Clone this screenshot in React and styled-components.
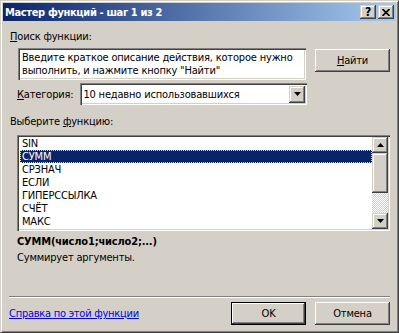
import React from 'react';
import styled, { createGlobalStyle, css } from 'styled-components';

const FACE = '#d4d0c8';
const FONT = `"DejaVu Sans Condensed", "Liberation Sans", Arial, sans-serif`;

const GlobalStyle = createGlobalStyle`
  html, body {
    margin: 0;
    padding: 0;
    background: ${FACE};
  }
  body {
    font-family: ${FONT};
    font-size: 11px;
    letter-spacing: -0.18px;
    color: #000;
  }
`;

// classic 3d edges
const sunken = css`
  box-shadow: inset 1px 1px #808080, inset 2px 2px #404040,
    inset -1px -1px #fff, inset -2px -2px ${FACE};
`;
const raised = css`
  box-shadow: inset -1px -1px #404040, inset 1px 1px #fff,
    inset -2px -2px #808080, inset 2px 2px ${FACE};
`;
const raisedSmall = css`
  box-shadow: inset -1px -1px #404040, inset 1px 1px ${FACE},
    inset -2px -2px #808080, inset 2px 2px #fff;
`;

const Window = styled.div`
  width: 399px;
  height: 333px;
  box-sizing: border-box;
  background: ${FACE};
  border-style: solid;
  border-width: 1px;
  border-color: ${FACE} #404040 #404040 ${FACE};
  box-shadow: inset 1px 1px #fff, inset -1px -1px #808080;
  padding: 2px;
  display: flex;
  flex-direction: column;
`;

const TitleBar = styled.div`
  height: 18px;
  flex: none;
  display: flex;
  align-items: center;
  padding-left: 2px;
  background: linear-gradient(to right, #0a246a, #a6caf0);
`;

const TitleText = styled.div`
  flex: 1;
  color: #fff;
  font-weight: bold;
  font-size: 11px;
  letter-spacing: -0.35px;
  white-space: nowrap;
`;

const TitleButton = styled.div`
  width: 16px;
  height: 14px;
  box-sizing: border-box;
  background: ${FACE};
  ${raisedSmall};
  display: flex;
  align-items: center;
  justify-content: center;
  margin-left: ${({ $ml }) => $ml || 0}px;
  margin-right: ${({ $mr }) => $mr || 0}px;
  font-weight: bold;
  font-size: 12px;
  line-height: 14px;
`;

const Body = styled.div`
  flex: 1;
  padding: 0 6px 0 7px;
  display: flex;
  flex-direction: column;
`;

const Label = styled.div`
  line-height: 13px;
  margin-top: ${({ $mt }) => $mt || 0}px;
  margin-left: ${({ $ml }) => $ml || 0}px;
  white-space: nowrap;
  font-weight: ${({ $bold }) => ($bold ? 'bold' : 'normal')};
`;

const Row = styled.div`
  display: flex;
  align-items: ${({ $align }) => $align || 'flex-start'};
  margin-top: ${({ $mt }) => $mt || 0}px;
`;

const SearchBox = styled.div`
  width: 288px;
  height: 32px;
  margin-left: 8px;
  box-sizing: border-box;
  padding: 3px 4px 0;
  background: #fff;
  ${sunken};
  line-height: 13px;
  white-space: nowrap;
  overflow: hidden;
`;

const Button = styled.div`
  width: 75px;
  height: 23px;
  box-sizing: border-box;
  background: ${FACE};
  display: flex;
  align-items: center;
  justify-content: center;
  margin-left: ${({ $ml }) => $ml || 0}px;
  margin-top: ${({ $mt }) => $mt || 0}px;
  ${raised};
  ${({ $default }) =>
    $default &&
    css`
      border: 1px solid #000;
    `}
`;

const Combo = styled.div`
  width: 227px;
  height: 22px;
  margin-left: ${({ $ml }) => $ml || 0}px;
  box-sizing: border-box;
  padding: 2px;
  background: #fff;
  ${sunken};
  display: flex;
  align-items: center;
`;

const ComboText = styled.div`
  flex: 1;
  padding-left: 1px;
  line-height: 13px;
  white-space: nowrap;
`;

const ArrowButton = styled.div`
  width: 16px;
  height: ${({ $h }) => $h || 16}px;
  flex: none;
  box-sizing: border-box;
  background: ${FACE};
  ${raisedSmall};
  display: flex;
  align-items: center;
  justify-content: center;
`;

const ListBox = styled.div`
  width: 373px;
  height: 96px;
  margin-left: 7px;
  margin-top: 7px;
  box-sizing: border-box;
  padding: 2px;
  background: #fff;
  ${sunken};
  display: flex;
`;

const Items = styled.div`
  flex: 1;
  overflow: hidden;
`;

const Item = styled.div`
  height: 13px;
  line-height: 11px;
  box-sizing: border-box;
  margin-left: 1px;
  padding-left: 1px;
  border: 1px dotted ${({ $selected }) => ($selected ? '#e8d890' : 'transparent')};
  background: ${({ $selected }) => ($selected ? '#0a246a' : 'transparent')};
  color: ${({ $selected }) => ($selected ? '#fff' : '#000')};
  white-space: nowrap;
`;

const ScrollBar = styled.div`
  width: 16px;
  display: flex;
  flex-direction: column;
`;

const Thumb = styled.div`
  height: 40px;
  background: ${FACE};
  ${raisedSmall};
`;

const Track = styled.div`
  flex: 1;
  background: repeating-conic-gradient(#fff 0 25%, ${FACE} 0 50%) 0 0 / 2px 2px;
`;

const Separator = styled.div`
  height: 2px;
  margin-top: 32px;
  margin-left: -1px;
  border-top: 1px solid #808080;
  border-bottom: 1px solid #fff;
  box-sizing: border-box;
`;

const Footer = styled.div`
  display: flex;
  align-items: center;
  margin-top: 4px;
`;

const HelpLink = styled.a`
  flex: 1;
  margin-left: -1px;
  color: #0000ff;
  text-decoration: underline;
  letter-spacing: -0.25px;
  cursor: pointer;
  white-space: nowrap;
`;

const Down = () => (
  <svg width="7" height="4" viewBox="0 0 7 4">
    <polygon points="0,0 7,0 3.5,4" fill="#000" />
  </svg>
);

const Up = () => (
  <svg width="7" height="4" viewBox="0 0 7 4">
    <polygon points="0,4 7,4 3.5,0" fill="#000" />
  </svg>
);

const CloseGlyph = () => (
  <svg width="8" height="7" viewBox="0 0 8 7">
    <path d="M0.5 0 L7.5 7 M7.5 0 L0.5 7" stroke="#000" strokeWidth="1.6" />
  </svg>
);

const functions = ['SIN', 'СУММ', 'СРЗНАЧ', 'ЕСЛИ', 'ГИПЕРССЫЛКА', 'СЧЁТ', 'МАКС'];

export default function App() {
  return (
    <>
      <GlobalStyle />
      <Window>
        <TitleBar>
          <TitleText>Мастер функций - шаг 1 из 2</TitleText>
          <TitleButton>?</TitleButton>
          <TitleButton $ml={2} $mr={2}>
            <CloseGlyph />
          </TitleButton>
        </TitleBar>
        <Body>
          <Label $mt={9}>
            <u>П</u>оиск функции:
          </Label>
          <Row $mt={5}>
            <SearchBox>
              Введите краткое описание действия, которое нужно
              <br />
              выполнить, и нажмите кнопку "Найти"
            </SearchBox>
            <Button $ml={9} $mt={1}>
              <span>
                <u>Н</u>айти
              </span>
            </Button>
          </Row>
          <Row $mt={3} $align="center">
            <Label $ml={7}>
              <u>К</u>атегория:
            </Label>
            <Combo $ml={7}>
              <ComboText>10 недавно использовавшихся</ComboText>
              <ArrowButton $h={17}>
                <Down />
              </ArrowButton>
            </Combo>
          </Row>
          <Label $mt={10}>
            Выберите <u>ф</u>ункцию:
          </Label>
          <ListBox>
            <Items>
              {functions.map((f) => (
                <Item key={f} $selected={f === 'СУММ'}>
                  {f}
                </Item>
              ))}
            </Items>
            <ScrollBar>
              <ArrowButton>
                <Up />
              </ArrowButton>
              <Thumb />
              <Track />
              <ArrowButton>
                <Down />
              </ArrowButton>
            </ScrollBar>
          </ListBox>
          <Label $mt={4} $ml={7} $bold>
            СУММ(число1;число2;...)
          </Label>
          <Label $mt={3} $ml={7}>
            Суммирует аргументы.
          </Label>
          <Separator />
          <Footer>
            <HelpLink>Справка по этой функции</HelpLink>
            <Button $default>OK</Button>
            <Button $ml={9}>Отмена</Button>
          </Footer>
        </Body>
      </Window>
    </>
  );
}
